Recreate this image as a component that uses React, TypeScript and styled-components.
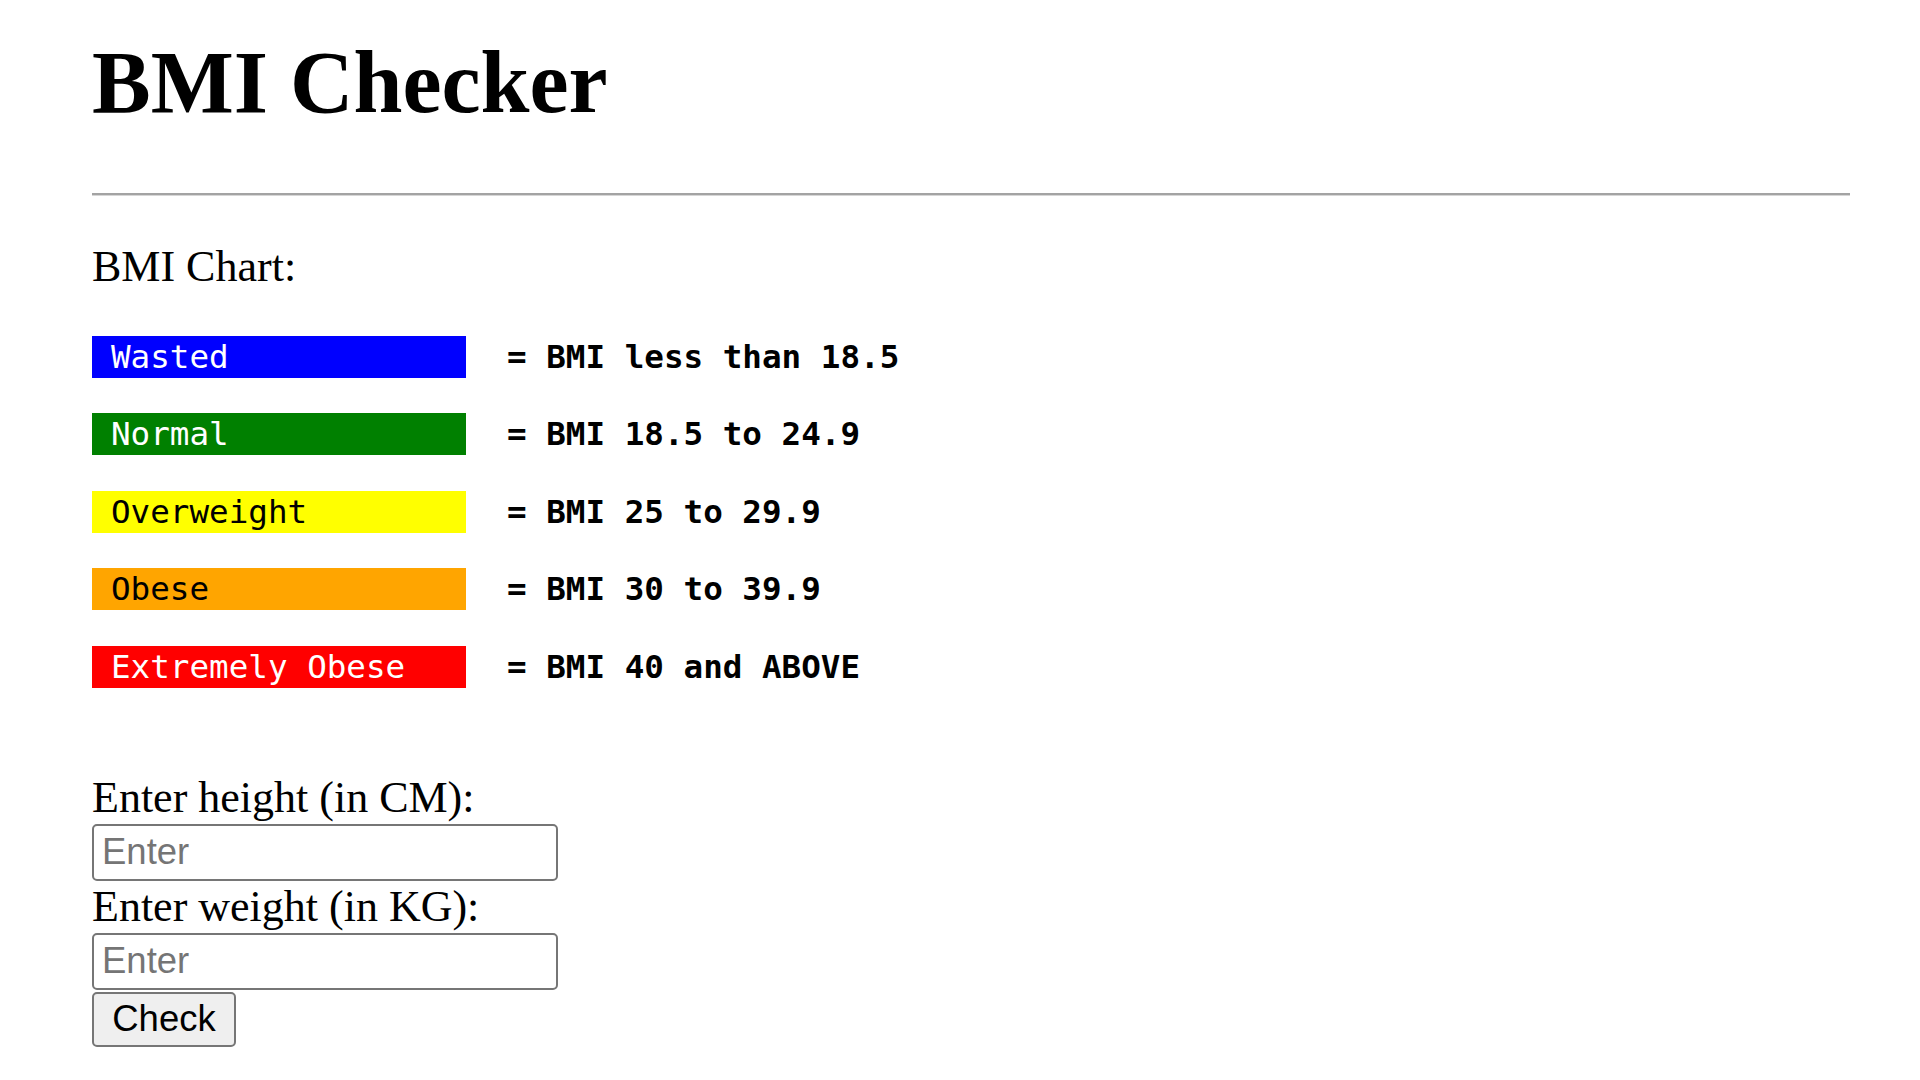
import React, { FC } from 'react'
import styled, { createGlobalStyle } from 'styled-components'

interface Category {
	label: string
	range: string
	bg: string
	fg: string
}

const categories: Category[] = [
	{ label: 'Wasted', range: '= BMI less than 18.5', bg: '#0000ff', fg: '#ffffff' },
	{ label: 'Normal', range: '= BMI 18.5 to 24.9', bg: '#008000', fg: '#ffffff' },
	{ label: 'Overweight', range: '= BMI 25 to 29.9', bg: '#ffff00', fg: '#000000' },
	{ label: 'Obese', range: '= BMI 30 to 39.9', bg: '#ffa500', fg: '#000000' },
	{ label: 'Extremely Obese', range: '= BMI 40 and ABOVE', bg: '#ff0000', fg: '#ffffff' },
]

const App: FC = () => {
	return (
		<>
			<GlobalStyle />
			<StyledPage>
				<StyledTitle>BMI Checker</StyledTitle>
				<StyledHR />
				<StyledChartHeading>BMI Chart:</StyledChartHeading>
				<StyledChart>
					{categories.map((c) => (
						<StyledRow key={c.label}>
							<StyledSwatch bg={c.bg} fg={c.fg}>
								{c.label}
							</StyledSwatch>
							<StyledRange>{c.range}</StyledRange>
						</StyledRow>
					))}
				</StyledChart>
				<StyledForm onSubmit={(e) => e.preventDefault()}>
					<StyledLabel htmlFor="height">Enter height (in CM):</StyledLabel>
					<StyledInput id="height" type="text" placeholder="Enter" />
					<StyledLabel htmlFor="weight">Enter weight (in KG):</StyledLabel>
					<StyledInput id="weight" type="text" placeholder="Enter" />
					<StyledButton type="submit">Check</StyledButton>
				</StyledForm>
			</StyledPage>
		</>
	)
}

export default App

const GlobalStyle = createGlobalStyle`
	body {
		margin: 0;
		background: #ffffff;
		color: #000000;
		font-family: 'Liberation Serif', 'Times New Roman', serif;
	}
`

const StyledPage = styled.div`
	display: flex;
	flex-direction: column;
	align-items: flex-start;
	padding: 33px 70px 0 92px;
`

const StyledTitle = styled.h1`
	margin: 0;
	font-size: 88px;
	line-height: 100px;
	font-weight: bold;
`

const StyledHR = styled.hr`
	align-self: stretch;
	margin: 59.5px 0 0;
	height: 0;
	border: none;
	border-top: 2px solid #a3a3a3;
	border-bottom: 1px solid #d6d6d6;
`

const StyledChartHeading = styled.p`
	margin: 46px 0 0;
	font-size: 44px;
	line-height: 50px;
`

const StyledChart = styled.div`
	display: flex;
	flex-direction: column;
	gap: 35.5px;
	margin-top: 44px;
`

const StyledRow = styled.div`
	display: flex;
	align-items: center;
	gap: 41px;
	font-family: 'DejaVu Sans Mono', 'Liberation Mono', monospace;
	font-size: 32.6px;
`

const StyledSwatch = styled.span<{ bg: string; fg: string }>`
	box-sizing: border-box;
	width: 374px;
	height: 42px;
	line-height: 42px;
	padding-left: 19px;
	background: ${({ bg }) => bg};
	color: ${({ fg }) => fg};
	white-space: pre;
`

const StyledRange = styled.span`
	font-weight: bold;
	white-space: pre;
`

const StyledForm = styled.form`
	display: flex;
	flex-direction: column;
	align-items: flex-start;
	margin-top: 84px;
`

const StyledLabel = styled.label`
	font-size: 44px;
	line-height: 50px;
	margin-top: 1px;

	& + input {
		margin-top: 1px;
	}
`

const StyledInput = styled.input`
	box-sizing: border-box;
	width: 466px;
	height: 57px;
	padding: 0 8px;
	border: 2px solid #767676;
	border-radius: 5px;
	font-family: 'Liberation Sans', Arial, sans-serif;
	font-size: 36.5px;
	color: #000000;
	background: #ffffff;

	&::placeholder {
		color: #757575;
	}
`

const StyledButton = styled.button`
	box-sizing: border-box;
	margin-top: 2px;
	width: 144px;
	height: 55px;
	padding: 0 16px;
	border: 2px solid #767676;
	border-radius: 5px;
	background: #efefef;
	color: #000000;
	font-family: 'Liberation Sans', Arial, sans-serif;
	font-size: 36.5px;
`
